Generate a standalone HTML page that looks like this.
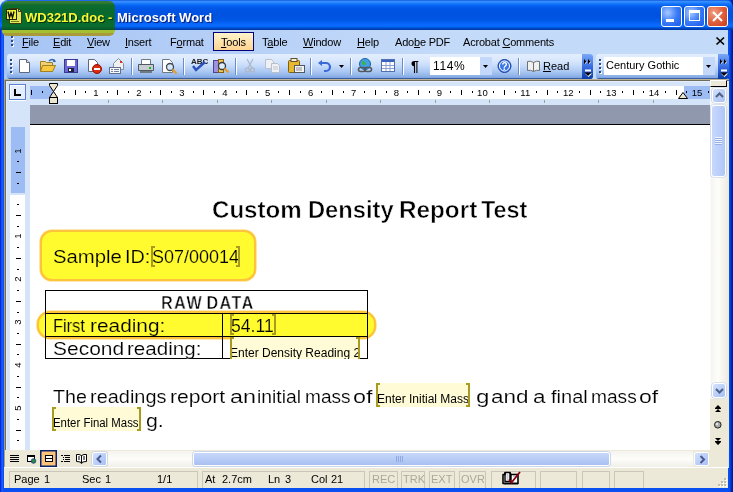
<!DOCTYPE html><html><head><meta charset="utf-8"><style>
*{box-sizing:border-box;margin:0;padding:0}
html,body{width:733px;height:492px;overflow:hidden;background:#fff;-webkit-font-smoothing:antialiased}
body{font-family:"Liberation Sans",sans-serif;font-size:11px;color:#000;position:relative}
.a{position:absolute}
svg{position:absolute;overflow:visible}
.mi{position:absolute;top:7px;white-space:nowrap;font-size:11px;letter-spacing:-0.2px}
.u{text-decoration:underline;text-underline-offset:1px}
.sep{position:absolute;top:4px;width:2px;height:17px;border-left:1px solid #6a8ccb;border-right:1px solid #fff}
.st{position:absolute;top:2px;height:17px;border:1px solid #c8c4b0;border-right-color:#fff;border-bottom-color:#fff;font-size:11px;line-height:15px;white-space:nowrap}
.doct{position:absolute;white-space:nowrap;font-family:"Liberation Sans",sans-serif;transform-origin:0 0;will-change:transform}
.ph{position:absolute;background:#fffbd6;font-size:12px;white-space:nowrap;overflow:hidden}
.brk{position:absolute;border:2px solid #a89c20;width:4px}
.brl{border-right:none}
.brr{border-left:none}
</style></head><body><div style="position:absolute;left:0;top:0;width:733px;height:492px;overflow:hidden;will-change:transform">
<div class="a" style="left:0;top:0;width:733px;height:492px;background:linear-gradient(90deg,#0a1ad8 0,#0a30e8 1px,#1a70ff 2px,#0a50f0 3px,#0a50f0 729px,#0848e8 730px,#0030c0 731px,#001890 733px)"></div>
<div class="a" style="left:0;top:0;width:8px;height:8px;background:#dce8f0"></div>
<div class="a" style="left:0;top:0;width:733px;height:30px;border-radius:8px 8px 0 0;background:linear-gradient(#0040d0 0px,#3a93ff 1px,#2a86ff 2.5px,#1272f8 4px,#0460f0 6px,#0056e6 9px,#0052e0 14px,#0054e3 18px,#005ae8 21px,#0866fc 24px,#0a6cff 26px,#0060f0 27px,#0048c0 28.5px,#0034a0 30px)"></div>
<div class="a" style="left:2px;top:1px;width:113px;height:34px;border-radius:6px;overflow:hidden;background:linear-gradient(#3c7c38 0px,#2e7a34 2px,#0e6c2e 4px,#0a6a2e 8px,#086a2c 20px,#0a6e30 25px,#0a5a28 28px,#0a4a22 30px,#a4c030 30px,#a4c030 33px,#a89a3a 33px)"></div>
<div class="a" style="left:117px;top:10px;font-weight:bold;font-size:13px;color:#fff;text-shadow:1px 1px #0a1e7a;white-space:nowrap">Microsoft Word</div>
<div class="a" style="left:25px;top:10px;font-weight:bold;font-size:13px;color:#f8f838;text-shadow:1px 1px #04300e;white-space:nowrap">WD321D.doc -</div>
<svg style="left:6px;top:8px" width="17" height="16" viewBox="0 0 17 16"><path d="M3.5 0.5h9l3 3v12h-12z" fill="#e0e858" stroke="#3c3c0c"/><path d="M12.5 0.5v3h3" fill="none" stroke="#3c3c0c"/><path d="M5 13.5h8" stroke="#7a8020"/><rect x="0.5" y="1.5" width="10" height="10" fill="#eef43c" stroke="#24280a"/><path d="M2 3.5l1.5 6 1.5-4.5 1.5 4.5 1.5-6" fill="none" stroke="#101004" stroke-width="1.4"/></svg>
<div class="a" style="left:661px;top:6px;width:21px;height:21px;border:1px solid #fff;border-radius:3px;background:radial-gradient(circle at 30% 30%,#a8c8ff 0%,#3a7cf8 50%,#1a58e8 100%)"></div>
<div class="a" style="left:684px;top:6px;width:21px;height:21px;border:1px solid #fff;border-radius:3px;background:radial-gradient(circle at 30% 30%,#a8c8ff 0%,#3a7cf8 50%,#1a58e8 100%)"></div>
<div class="a" style="left:707px;top:6px;width:21px;height:21px;border:1px solid #fff;border-radius:3px;background:radial-gradient(circle at 30% 30%,#f0a080 0%,#e06040 50%,#c83a18 100%)"></div>
<div class="a" style="left:666px;top:19px;width:8px;height:3px;background:#fff"></div>
<div class="a" style="left:689px;top:10px;width:11px;height:11px;border:1px solid #fff;border-top-width:3px"></div>
<svg style="left:712px;top:11px" width="11" height="11"><path d="M1 1L10 10M10 1L1 10" stroke="#fff" stroke-width="2"/></svg>
<div class="a" style="left:4px;top:30px;width:724px;height:24px;background:linear-gradient(90deg,#a6c4f4,#c4daf9 60%,#c4daf9)"></div>
<div class="a" style="left:2px;top:30px;width:113px;height:6px;border-radius:0 0 7px 6px;background:linear-gradient(#a4c030 0,#a4c030 3px,#a89a3a 3px)"></div>
<div class="a" style="left:11px;top:36px;width:2px;height:2px;background:#2a4a8a;box-shadow:1px 1px #fff"></div>
<div class="a" style="left:11px;top:40px;width:2px;height:2px;background:#2a4a8a;box-shadow:1px 1px #fff"></div>
<div class="a" style="left:11px;top:44px;width:2px;height:2px;background:#2a4a8a;box-shadow:1px 1px #fff"></div>
<div class="a" style="left:213px;top:32px;width:41px;height:19px;border:1px solid #000080;background:linear-gradient(#fff4cc,#ffd490)"></div>
<div class="mi" style="left:22px;top:36px"><span class="u">F</span>ile</div>
<div class="mi" style="left:53px;top:36px"><span class="u">E</span>dit</div>
<div class="mi" style="left:87px;top:36px"><span class="u">V</span>iew</div>
<div class="mi" style="left:125px;top:36px"><span class="u">I</span>nsert</div>
<div class="mi" style="left:170px;top:36px">F<span class="u">o</span>rmat</div>
<div class="mi" style="left:221px;top:36px"><span class="u">T</span>ools</div>
<div class="mi" style="left:262px;top:36px">T<span class="u">a</span>ble</div>
<div class="mi" style="left:303px;top:36px"><span class="u">W</span>indow</div>
<div class="mi" style="left:357px;top:36px"><span class="u">H</span>elp</div>
<div class="mi" style="left:395px;top:36px">Ado<span class="u">b</span>e PDF</div>
<div class="mi" style="left:463px;top:36px">Acrobat <span class="u">C</span>omments</div>
<svg style="left:716px;top:37px" width="9" height="8"><path d="M0.5 0.5L8 7.5M8 0.5L0.5 7.5" stroke="#000" stroke-width="1.7"/></svg>
<div class="a" style="left:4px;top:54px;width:724px;height:25px;background:linear-gradient(90deg,#a6c4f4,#c4daf9 60%,#c4daf9)"></div>
<div class="a" style="left:7px;top:54px;width:586px;height:25px;border-radius:3px;background:linear-gradient(#e3effe 0px,#dae8fd 6px,#c5dafa 12px,#a8c6f2 18px,#8eb2e8 22px,#7ea2e2 24px,#3b5ea0 24px)"></div>
<div class="a" style="left:596px;top:54px;width:132px;height:25px;border-radius:3px;background:linear-gradient(#e3effe 0px,#dae8fd 6px,#c5dafa 12px,#a8c6f2 18px,#8eb2e8 22px,#7ea2e2 24px,#3b5ea0 24px)"></div>
<div class="a" style="left:10px;top:59px;width:2px;height:2px;background:#2a4a8a;box-shadow:1px 1px #fff"></div>
<div class="a" style="left:599px;top:59px;width:2px;height:2px;background:#2a4a8a;box-shadow:1px 1px #fff"></div>
<div class="a" style="left:10px;top:63px;width:2px;height:2px;background:#2a4a8a;box-shadow:1px 1px #fff"></div>
<div class="a" style="left:599px;top:63px;width:2px;height:2px;background:#2a4a8a;box-shadow:1px 1px #fff"></div>
<div class="a" style="left:10px;top:67px;width:2px;height:2px;background:#2a4a8a;box-shadow:1px 1px #fff"></div>
<div class="a" style="left:599px;top:67px;width:2px;height:2px;background:#2a4a8a;box-shadow:1px 1px #fff"></div>
<div class="a" style="left:10px;top:71px;width:2px;height:2px;background:#2a4a8a;box-shadow:1px 1px #fff"></div>
<div class="a" style="left:599px;top:71px;width:2px;height:2px;background:#2a4a8a;box-shadow:1px 1px #fff"></div>
<div class="a" style="left:582px;top:54px;width:11px;height:25px;border-radius:0 3px 3px 0;background:linear-gradient(#7aa8f8,#3a6ee0 50%,#0a3aa8)"></div>
<div class="a" style="left:718px;top:54px;width:11px;height:25px;border-radius:0 3px 3px 0;background:linear-gradient(#7aa8f8,#3a6ee0 50%,#0a3aa8)"></div>
<svg style="left:583px;top:58px" width="10" height="20"><path d="M2 2l2 2-2 2zM6 2l2 2-2 2z" fill="#fff"/><path d="M1 1l2.5 2.5-2.5 2.5zM5 1l2.5 2.5-2.5 2.5z" fill="#000"/><rect x="2" y="11.5" width="6" height="2" fill="#fff"/><path d="M2 15.5h7l-3.5 3.5z" fill="#fff"/><path d="M1.5 14.5h7l-3.5 3.5z" fill="#000"/></svg>
<svg style="left:719px;top:58px" width="10" height="20"><path d="M2 2l2 2-2 2zM6 2l2 2-2 2z" fill="#fff"/><path d="M1 1l2.5 2.5-2.5 2.5zM5 1l2.5 2.5-2.5 2.5z" fill="#000"/><rect x="2" y="11.5" width="6" height="2" fill="#fff"/><path d="M2 15.5h7l-3.5 3.5z" fill="#fff"/><path d="M1.5 14.5h7l-3.5 3.5z" fill="#000"/></svg>
<div class="sep" style="left:131px;top:58px"></div>
<div class="sep" style="left:183px;top:58px"></div>
<div class="sep" style="left:235px;top:58px"></div>
<div class="sep" style="left:310px;top:58px"></div>
<div class="sep" style="left:350px;top:58px"></div>
<div class="sep" style="left:402px;top:58px"></div>
<div class="sep" style="left:518px;top:58px"></div>
<svg style="left:19px;top:59px" width="12" height="14" viewBox="0 0 12 14"><path d="M0.5 0.5h7l3 3v10h-10z" fill="#fff" stroke="#606880"/><path d="M7.5 0.5v3h3" fill="#dde" stroke="#606880"/></svg>
<svg style="left:40px;top:58px" width="17" height="15" viewBox="0 0 17 15"><path d="M0.5 3.5h5l1 1h6v9h-12z" fill="#f0d070" stroke="#a08020"/><path d="M2.5 7.5h13l-3 6h-12z" fill="#f8c840" stroke="#a08020"/><path d="M9 3q3-3 6 0" stroke="#3060b0" fill="none" stroke-width="1.5"/><path d="M14 1l2 3-3 0z" fill="#3060b0"/></svg>
<svg style="left:64px;top:59px" width="14" height="14" viewBox="0 0 14 14"><rect x="0.5" y="0.5" width="13" height="13" fill="#6a68d0" stroke="#3a3890"/><rect x="3" y="1" width="8" height="6" fill="#fff"/><rect x="4" y="9" width="6" height="4" fill="#202040"/><rect x="5" y="10" width="2" height="2" fill="#fff"/></svg>
<svg style="left:88px;top:59px" width="14" height="15" viewBox="0 0 14 15"><path d="M0.5 0.5h6l3 3v9h-9z" fill="#fff" stroke="#606880"/><circle cx="9" cy="10" r="4.5" fill="#e02a10" stroke="#901000"/><rect x="6" y="9" width="6" height="2" fill="#fff"/></svg>
<svg style="left:109px;top:58px" width="17" height="16" viewBox="0 0 17 16"><path d="M4.5 5.5l5-5 5 5v6h-10z" fill="#f0f0f0" stroke="#8090a0"/><rect x="11" y="3" width="2" height="2" fill="#e03020"/><rect x="0.5" y="9.5" width="11" height="6" fill="#f8f8f8" stroke="#607090"/><path d="M2 11.5h2M2 13.5h2M5 11.5h5M5 13.5h5" stroke="#7080a0"/></svg>
<svg style="left:138px;top:59px" width="16" height="14" viewBox="0 0 16 14"><path d="M3.5 0.5h9v5h-9z" fill="#fff" stroke="#707880"/><path d="M0.5 5.5h15v6h-15z" fill="#c8ccd4" stroke="#505860"/><rect x="2" y="12" width="12" height="2" fill="#707880"/><rect x="11" y="8" width="2" height="2" fill="#10c020"/></svg>
<svg style="left:162px;top:59px" width="16" height="15" viewBox="0 0 16 15"><path d="M0.5 0.5h7l3 3v10h-10z" fill="#fff" stroke="#707880"/><circle cx="8" cy="8" r="3.5" fill="#d8e8f8" stroke="#404850" stroke-width="1.3"/><path d="M10.5 10.5l4 4" stroke="#e0a030" stroke-width="2.4"/></svg>
<svg style="left:190px;top:57px" width="17" height="15" viewBox="0 0 17 15"><text x="1" y="7" font-size="8" font-family="Liberation Sans" font-weight="bold" fill="#202020">ABC</text><path d="M3 9l3 4 9-8" stroke="#2a50c0" stroke-width="2.5" fill="none"/></svg>
<svg style="left:213px;top:58px" width="16" height="15" viewBox="0 0 16 15"><rect x="0.5" y="2.5" width="5" height="12" fill="#a090e0" stroke="#504090"/><rect x="5.5" y="1.5" width="5" height="13" fill="#f0c850" stroke="#806020"/><circle cx="9" cy="8" r="3.5" fill="#e0ecf8" stroke="#303840" stroke-width="1.3"/><path d="M11.5 10.5l4 4" stroke="#e0a030" stroke-width="2.4"/></svg>
<svg style="left:245px;top:59px" width="10" height="14" viewBox="0 0 10 14"><path d="M2 0l5 9M8 0l-5 9" stroke="#b0b8c8" stroke-width="1.3"/><circle cx="2.5" cy="11" r="2" fill="none" stroke="#b0b8c8" stroke-width="1.3"/><circle cx="7.5" cy="11" r="2" fill="none" stroke="#b0b8c8" stroke-width="1.3"/></svg>
<svg style="left:265px;top:59px" width="15" height="14" viewBox="0 0 15 14"><path d="M0.5 0.5h6l2 2v7h-8z" fill="#eef0f4" stroke="#b8c0cc"/><path d="M6.5 4.5h6l2 2v7h-8z" fill="#eef0f4" stroke="#b8c0cc"/><path d="M8 8h5M8 10h5" stroke="#c0c8d0"/></svg>
<svg style="left:288px;top:58px" width="17" height="15" viewBox="0 0 17 15"><rect x="0.5" y="2.5" width="11" height="12" rx="1" fill="#e8b830" stroke="#806010"/><rect x="3" y="0.5" width="6" height="3" fill="#f8f0d0" stroke="#605030"/><rect x="6.5" y="7.5" width="10" height="7" fill="#f4f4f4" stroke="#505860"/><path d="M8 10h6M8 12h6" stroke="#909090"/></svg>
<svg style="left:318px;top:60px" width="14" height="12" viewBox="0 0 14 12"><path d="M3 3h5a4 4 0 0 1 0 8h-2" stroke="#3a6ad8" stroke-width="2.2" fill="none"/><path d="M0 3l4-3v6z" fill="#3a6ad8"/></svg>
<svg style="left:339px;top:65px" width="6" height="3" viewBox="0 0 6 3"><path d="M0 0h5l-2.5 3z" fill="#000"/></svg>
<svg style="left:357px;top:58px" width="16" height="15" viewBox="0 0 16 15"><circle cx="8" cy="6" r="5.5" fill="#40a0e0" stroke="#2060a0"/><path d="M5 3q3 0 4 3q-2 2-4 0z" fill="#40b040"/><rect x="1.5" y="9.5" width="7" height="4" rx="2" fill="none" stroke="#505860" stroke-width="1.6"/><rect x="7.5" y="9.5" width="7" height="4" rx="2" fill="none" stroke="#505860" stroke-width="1.6"/></svg>
<svg style="left:381px;top:59px" width="14" height="13" viewBox="0 0 14 13"><rect x="0.5" y="0.5" width="13" height="12" fill="#fff" stroke="#5070b0"/><rect x="1" y="1" width="12" height="2" fill="#3a60c0"/><path d="M1 6.5h12M1 9.5h12M5 3v9M9 3v9" stroke="#8aa0d0"/></svg>
<div class="a" style="left:411px;top:58px;font-size:14px;font-weight:bold">&para;</div>
<div class="a" style="left:430px;top:57px;width:62px;height:18px;background:#fff"></div>
<div class="a" style="left:480px;top:57px;width:12px;height:18px;background:#c4d8fa"></div>
<svg style="left:483px;top:65px" width="6" height="3" viewBox="0 0 6 3"><path d="M0 0h5l-2.5 3z" fill="#000"/></svg>
<div class="a" style="left:433px;top:59px;font-size:12px;letter-spacing:0.6px">114%</div>
<svg style="left:497px;top:59px" width="15" height="15" viewBox="0 0 15 15"><circle cx="7.5" cy="7" r="6.5" fill="#3a78e8" stroke="#1a3aa0"/><circle cx="7.5" cy="7" r="5" fill="none" stroke="#fff" stroke-width="1"/><text x="4.5" y="10.5" font-size="10" font-weight="bold" fill="#fff" font-family="Liberation Sans">?</text></svg>
<svg style="left:527px;top:60px" width="14" height="12" viewBox="0 0 14 12"><path d="M0.5 1.5q3-1 6 1q3-2 6-1v9q-3-1-6 1q-3-2-6-1z" fill="#f0f0f0" stroke="#707070"/><path d="M6.5 2.5v9" stroke="#707070"/></svg>
<div class="a" style="left:543px;top:60px;font-size:11px"><span class="u">R</span>ead</div>
<div class="a" style="left:604px;top:57px;width:111px;height:18px;background:#fff"></div>
<div class="a" style="left:703px;top:57px;width:12px;height:18px;background:#c4d8fa"></div>
<svg style="left:706px;top:65px" width="6" height="3" viewBox="0 0 6 3"><path d="M0 0h5l-2.5 3z" fill="#000"/></svg>
<div class="a" style="left:606px;top:59px;font-size:11px">Century Gothic</div>
<div class="a" style="left:4px;top:79px;width:725px;height:389px;background:#a4a08a;border-top:1px solid #bcb294"></div>
<div class="a" style="left:5px;top:80px;width:724px;height:388px;background:#6e6c5e"></div>
<div class="a" style="left:6px;top:81px;width:723px;height:387px;background:#d6e4fa;border-left:1px solid #e4eefc;border-top:1px solid #e4eefc"></div>
<div class="a" style="left:9px;top:100px;width:17px;height:1px;background:#fff"></div>
<div class="a" style="left:9px;top:84px;width:17px;height:16px;border:1px solid #5a80d8;background:#e4eefc;box-shadow:inset 1px 1px #fff"></div>
<div class="a" style="left:14px;top:89px;width:2px;height:7px;background:#000"></div><div class="a" style="left:14px;top:94px;width:7px;height:2px;background:#000"></div>
<div class="a" style="left:30px;top:86px;width:681px;height:13px;background:#fff"></div>
<div class="a" style="left:30px;top:86px;width:24px;height:13px;background:#9ebcf4"></div>
<div class="a" style="left:684px;top:86px;width:27px;height:13px;background:#9ebcf4"></div>
<div class="a" style="left:31px;top:90px;width:1px;height:5px;background:#000"></div>
<div class="a" style="left:42px;top:91px;width:1px;height:2px;background:#000"></div>
<div class="a" style="left:64px;top:91px;width:1px;height:2px;background:#000"></div>
<div class="a" style="left:75px;top:90px;width:1px;height:5px;background:#000"></div>
<div class="a" style="left:85px;top:91px;width:1px;height:2px;background:#000"></div>
<div class="a" style="left:86.0px;top:86px;width:20px;text-align:center;font-size:9.5px;line-height:13px">1</div>
<div class="a" style="left:107px;top:91px;width:1px;height:2px;background:#000"></div>
<div class="a" style="left:117px;top:90px;width:1px;height:5px;background:#000"></div>
<div class="a" style="left:128px;top:91px;width:1px;height:2px;background:#000"></div>
<div class="a" style="left:128.9px;top:86px;width:20px;text-align:center;font-size:9.5px;line-height:13px">2</div>
<div class="a" style="left:150px;top:91px;width:1px;height:2px;background:#000"></div>
<div class="a" style="left:160px;top:90px;width:1px;height:5px;background:#000"></div>
<div class="a" style="left:171px;top:91px;width:1px;height:2px;background:#000"></div>
<div class="a" style="left:171.9px;top:86px;width:20px;text-align:center;font-size:9.5px;line-height:13px">3</div>
<div class="a" style="left:193px;top:91px;width:1px;height:2px;background:#000"></div>
<div class="a" style="left:203px;top:90px;width:1px;height:5px;background:#000"></div>
<div class="a" style="left:214px;top:91px;width:1px;height:2px;background:#000"></div>
<div class="a" style="left:214.8px;top:86px;width:20px;text-align:center;font-size:9.5px;line-height:13px">4</div>
<div class="a" style="left:236px;top:91px;width:1px;height:2px;background:#000"></div>
<div class="a" style="left:246px;top:90px;width:1px;height:5px;background:#000"></div>
<div class="a" style="left:257px;top:91px;width:1px;height:2px;background:#000"></div>
<div class="a" style="left:257.7px;top:86px;width:20px;text-align:center;font-size:9.5px;line-height:13px">5</div>
<div class="a" style="left:278px;top:91px;width:1px;height:2px;background:#000"></div>
<div class="a" style="left:289px;top:90px;width:1px;height:5px;background:#000"></div>
<div class="a" style="left:300px;top:91px;width:1px;height:2px;background:#000"></div>
<div class="a" style="left:300.6px;top:86px;width:20px;text-align:center;font-size:9.5px;line-height:13px">6</div>
<div class="a" style="left:321px;top:91px;width:1px;height:2px;background:#000"></div>
<div class="a" style="left:332px;top:90px;width:1px;height:5px;background:#000"></div>
<div class="a" style="left:343px;top:91px;width:1px;height:2px;background:#000"></div>
<div class="a" style="left:343.6px;top:86px;width:20px;text-align:center;font-size:9.5px;line-height:13px">7</div>
<div class="a" style="left:364px;top:91px;width:1px;height:2px;background:#000"></div>
<div class="a" style="left:375px;top:90px;width:1px;height:5px;background:#000"></div>
<div class="a" style="left:386px;top:91px;width:1px;height:2px;background:#000"></div>
<div class="a" style="left:386.5px;top:86px;width:20px;text-align:center;font-size:9.5px;line-height:13px">8</div>
<div class="a" style="left:407px;top:91px;width:1px;height:2px;background:#000"></div>
<div class="a" style="left:418px;top:90px;width:1px;height:5px;background:#000"></div>
<div class="a" style="left:429px;top:91px;width:1px;height:2px;background:#000"></div>
<div class="a" style="left:429.4px;top:86px;width:20px;text-align:center;font-size:9.5px;line-height:13px">9</div>
<div class="a" style="left:450px;top:91px;width:1px;height:2px;background:#000"></div>
<div class="a" style="left:461px;top:90px;width:1px;height:5px;background:#000"></div>
<div class="a" style="left:472px;top:91px;width:1px;height:2px;background:#000"></div>
<div class="a" style="left:472.4px;top:86px;width:20px;text-align:center;font-size:9.5px;line-height:13px">10</div>
<div class="a" style="left:493px;top:91px;width:1px;height:2px;background:#000"></div>
<div class="a" style="left:504px;top:90px;width:1px;height:5px;background:#000"></div>
<div class="a" style="left:515px;top:91px;width:1px;height:2px;background:#000"></div>
<div class="a" style="left:515.3px;top:86px;width:20px;text-align:center;font-size:9.5px;line-height:13px">11</div>
<div class="a" style="left:536px;top:91px;width:1px;height:2px;background:#000"></div>
<div class="a" style="left:547px;top:90px;width:1px;height:5px;background:#000"></div>
<div class="a" style="left:557px;top:91px;width:1px;height:2px;background:#000"></div>
<div class="a" style="left:558.2px;top:86px;width:20px;text-align:center;font-size:9.5px;line-height:13px">12</div>
<div class="a" style="left:579px;top:91px;width:1px;height:2px;background:#000"></div>
<div class="a" style="left:590px;top:90px;width:1px;height:5px;background:#000"></div>
<div class="a" style="left:600px;top:91px;width:1px;height:2px;background:#000"></div>
<div class="a" style="left:601.2px;top:86px;width:20px;text-align:center;font-size:9.5px;line-height:13px">13</div>
<div class="a" style="left:622px;top:91px;width:1px;height:2px;background:#000"></div>
<div class="a" style="left:633px;top:90px;width:1px;height:5px;background:#000"></div>
<div class="a" style="left:643px;top:91px;width:1px;height:2px;background:#000"></div>
<div class="a" style="left:644.1px;top:86px;width:20px;text-align:center;font-size:9.5px;line-height:13px">14</div>
<div class="a" style="left:665px;top:91px;width:1px;height:2px;background:#000"></div>
<div class="a" style="left:676px;top:90px;width:1px;height:5px;background:#000"></div>
<div class="a" style="left:686px;top:91px;width:1px;height:2px;background:#000"></div>
<div class="a" style="left:687.0px;top:86px;width:20px;text-align:center;font-size:9.5px;line-height:13px">15</div>
<div class="a" style="left:708px;top:91px;width:1px;height:2px;background:#000"></div>
<div class="a" style="left:108px;top:100px;width:1px;height:3px;background:#a0a0a0"></div>
<div class="a" style="left:162px;top:100px;width:1px;height:3px;background:#a0a0a0"></div>
<div class="a" style="left:217px;top:100px;width:1px;height:3px;background:#a0a0a0"></div>
<div class="a" style="left:271px;top:100px;width:1px;height:3px;background:#a0a0a0"></div>
<div class="a" style="left:326px;top:100px;width:1px;height:3px;background:#a0a0a0"></div>
<div class="a" style="left:380px;top:100px;width:1px;height:3px;background:#a0a0a0"></div>
<div class="a" style="left:435px;top:100px;width:1px;height:3px;background:#a0a0a0"></div>
<div class="a" style="left:489px;top:100px;width:1px;height:3px;background:#a0a0a0"></div>
<div class="a" style="left:544px;top:100px;width:1px;height:3px;background:#a0a0a0"></div>
<div class="a" style="left:598px;top:100px;width:1px;height:3px;background:#a0a0a0"></div>
<div class="a" style="left:653px;top:100px;width:1px;height:3px;background:#a0a0a0"></div>
<svg style="left:49px;top:83px" width="10" height="22" viewBox="0 0 10 22"><path d="M0.5 0.5h8v2l-4 6-4-6z" fill="#ece6d0" stroke="#000"/><path d="M4.5 8.5l4 6v0h-8z" fill="#ece6d0" stroke="#000"/><rect x="0.5" y="14.5" width="8" height="6" fill="#ece6d0" stroke="#000"/></svg>
<svg style="left:678px;top:91px" width="10" height="8" viewBox="0 0 10 8"><path d="M0.5 7.5l4.5-6 4.5 6z" fill="#ece6d0" stroke="#000"/></svg>
<div class="a" style="left:30px;top:105px;width:681px;height:20px;background:#8f98ac;border-bottom:1px solid #000"></div>
<div class="a" style="left:30px;top:125px;width:681px;height:325px;background:#fff"></div>
<div class="a" style="left:10px;top:195px;width:15px;height:255px;background:#fff"></div>
<div class="a" style="left:11px;top:127px;width:14px;height:66px;background:#9ebcf4"></div>
<div class="a" style="left:11px;top:144.6px;width:14px;height:12px"><div style="position:absolute;left:0;top:0;width:14px;height:12px;transform:rotate(-90deg);text-align:center;font-size:9.5px;line-height:12px">1</div></div>
<div class="a" style="left:17px;top:161px;width:2px;height:1px;background:#000"></div>
<div class="a" style="left:16px;top:172px;width:5px;height:1px;background:#000"></div>
<div class="a" style="left:17px;top:183px;width:2px;height:1px;background:#000"></div>
<div class="a" style="left:17px;top:204px;width:2px;height:1px;background:#000"></div>
<div class="a" style="left:16px;top:215px;width:5px;height:1px;background:#000"></div>
<div class="a" style="left:17px;top:226px;width:2px;height:1px;background:#000"></div>
<div class="a" style="left:11px;top:230.4px;width:14px;height:12px"><div style="position:absolute;left:0;top:0;width:14px;height:12px;transform:rotate(-90deg);text-align:center;font-size:9.5px;line-height:12px">1</div></div>
<div class="a" style="left:17px;top:247px;width:2px;height:1px;background:#000"></div>
<div class="a" style="left:16px;top:258px;width:5px;height:1px;background:#000"></div>
<div class="a" style="left:17px;top:269px;width:2px;height:1px;background:#000"></div>
<div class="a" style="left:11px;top:273.4px;width:14px;height:12px"><div style="position:absolute;left:0;top:0;width:14px;height:12px;transform:rotate(-90deg);text-align:center;font-size:9.5px;line-height:12px">2</div></div>
<div class="a" style="left:17px;top:290px;width:2px;height:1px;background:#000"></div>
<div class="a" style="left:16px;top:301px;width:5px;height:1px;background:#000"></div>
<div class="a" style="left:17px;top:312px;width:2px;height:1px;background:#000"></div>
<div class="a" style="left:11px;top:316.3px;width:14px;height:12px"><div style="position:absolute;left:0;top:0;width:14px;height:12px;transform:rotate(-90deg);text-align:center;font-size:9.5px;line-height:12px">3</div></div>
<div class="a" style="left:17px;top:333px;width:2px;height:1px;background:#000"></div>
<div class="a" style="left:16px;top:344px;width:5px;height:1px;background:#000"></div>
<div class="a" style="left:17px;top:354px;width:2px;height:1px;background:#000"></div>
<div class="a" style="left:11px;top:359.2px;width:14px;height:12px"><div style="position:absolute;left:0;top:0;width:14px;height:12px;transform:rotate(-90deg);text-align:center;font-size:9.5px;line-height:12px">4</div></div>
<div class="a" style="left:17px;top:376px;width:2px;height:1px;background:#000"></div>
<div class="a" style="left:16px;top:387px;width:5px;height:1px;background:#000"></div>
<div class="a" style="left:17px;top:397px;width:2px;height:1px;background:#000"></div>
<div class="a" style="left:11px;top:402.1px;width:14px;height:12px"><div style="position:absolute;left:0;top:0;width:14px;height:12px;transform:rotate(-90deg);text-align:center;font-size:9.5px;line-height:12px">5</div></div>
<div class="a" style="left:17px;top:419px;width:2px;height:1px;background:#000"></div>
<div class="a" style="left:16px;top:430px;width:5px;height:1px;background:#000"></div>
<div class="a" style="left:17px;top:440px;width:2px;height:1px;background:#000"></div>
<div class="a" style="left:710px;top:81px;width:19px;height:369px;background:linear-gradient(90deg,#fff 0,#f6f5f0 1px,#fdfdfa 8px,#f0efe6 16px,#ecebe0 18px)"></div>
<div class="a" style="left:710px;top:80px;width:17px;height:7px;background:#ece9d8;border:1px solid #000;border-top-color:#fff;border-left-color:#fff"></div>
<div class="a" style="left:712px;top:88px;width:14px;height:15px;border:1px solid #fff;border-radius:3px;background:linear-gradient(135deg,#d4e2fc,#bcd0f8 50%,#a8c0f4);box-shadow:0 0 0 0.6px #b8c8f0"></div>
<svg style="left:715px;top:92px" width="9" height="6" viewBox="0 0 9 6"><path d="M1 5l3.5-3.5 3.5 3.5" stroke="#4d6185" stroke-width="2" fill="none"/></svg>
<div class="a" style="left:711px;top:105px;width:15px;height:72px;border:1px solid #fff;border-radius:3px;background:linear-gradient(90deg,#c8d8fc,#bcd0fa 50%,#b0c6f6);box-shadow:0 0 0 0.6px #b8c8f0"></div>
<div class="a" style="left:715px;top:137px;width:7px;height:2px;background:#eef4fe;border-bottom:1px solid #98b0e8"></div>
<div class="a" style="left:715px;top:139px;width:7px;height:2px;background:#eef4fe;border-bottom:1px solid #98b0e8"></div>
<div class="a" style="left:715px;top:141px;width:7px;height:2px;background:#eef4fe;border-bottom:1px solid #98b0e8"></div>
<div class="a" style="left:715px;top:143px;width:7px;height:2px;background:#eef4fe;border-bottom:1px solid #98b0e8"></div>
<div class="a" style="left:712px;top:383px;width:14px;height:15px;border:1px solid #fff;border-radius:3px;background:linear-gradient(135deg,#d4e2fc,#bcd0f8 50%,#a8c0f4);box-shadow:0 0 0 0.6px #b8c8f0"></div>
<svg style="left:715px;top:388px" width="9" height="6" viewBox="0 0 9 6"><path d="M1 1l3.5 3.5 3.5-3.5" stroke="#4d6185" stroke-width="2" fill="none"/></svg>
<div class="a" style="left:710px;top:399px;width:19px;height:51px;background:#ece9d8"></div>
<svg style="left:715px;top:405px" width="7" height="7" viewBox="0 0 7 7"><path d="M0 3l3-3 3 3z M0 3h6v1h-6z M0 7l3-3 3 3z" fill="#000"/></svg>
<svg style="left:714px;top:421px" width="8" height="8" viewBox="0 0 8 8"><circle cx="3.8" cy="3.8" r="3.3" fill="#a8a8a8" stroke="#202020"/><circle cx="3" cy="3" r="1.2" fill="#e8e8e8"/></svg>
<svg style="left:715px;top:438px" width="7" height="7" viewBox="0 0 7 7"><path d="M0 0l3 3 3-3z M0 4l3 3 3-3z M0 3h6v1h-6z" fill="#000"/></svg>
<div class="a" style="left:5px;top:450px;width:723px;height:17px;background:#ece9d8"></div>
<svg style="left:10px;top:455px" width="9" height="8" viewBox="0 0 9 8"><path d="M0 0.5h9M0 2.5h9M0 4.5h9M0 6.5h9" stroke="#000"/></svg>
<svg style="left:27px;top:455px" width="9" height="9" viewBox="0 0 9 9"><rect x="0.5" y="0.5" width="7" height="6" fill="#fff" stroke="#000"/><rect x="0" y="0" width="8" height="2" fill="#000"/><circle cx="6.5" cy="6" r="2.3" fill="#2a8a3a" stroke="#1a3a8a" stroke-width="0.8"/></svg>
<div class="a" style="left:40px;top:450px;width:17px;height:17px;background:#ffc37a;border:1px solid #0a246a;box-shadow:inset 0 0 0 0.5px #0a246a"></div>
<svg style="left:45px;top:455px" width="8" height="7" viewBox="0 0 8 7"><rect x="0.5" y="0.5" width="7" height="6" fill="#fff" stroke="#000"/><path d="M1 3.5h6" stroke="#000"/></svg>
<svg style="left:61px;top:455px" width="10" height="8" viewBox="0 0 10 8"><path d="M0 0.5h2M3 0.5h6M2 2.5h1M4 2.5h5M2 4.5h1M4 4.5h5M0 6.5h2M3 6.5h6" stroke="#000"/></svg>
<svg style="left:76px;top:454px" width="11" height="10" viewBox="0 0 11 10"><path d="M0.5 0.5q2.5-0.5 5 1q2.5-1.5 5-1v7q-2.5 0-5 1q-2.5-1-5-1z" fill="#fff" stroke="#000"/><path d="M5.5 1.5v7M2 3h2M2 5h2M7 3h2M7 5h2" stroke="#000"/><path d="M4 8.5h3l-1.5 1.5z" fill="#000"/></svg>
<div class="a" style="left:92px;top:452px;width:15px;height:14px;border:1px solid #fff;border-radius:2px;background:linear-gradient(135deg,#d4e2fc,#bcd0f8 50%,#a8c0f4);box-shadow:0 0 0 0.5px #b8c8e8"></div>
<svg style="left:96px;top:455px" width="7" height="8" viewBox="0 0 7 8"><path d="M5 0.5l-3.5 3.5 3.5 3.5" stroke="#4a5a90" stroke-width="2" fill="none"/></svg>
<div class="a" style="left:108px;top:451px;width:585px;height:16px;background:linear-gradient(#f4f3ee,#fdfdfa 50%,#f0efe8)"></div>
<div class="a" style="left:193px;top:452px;width:417px;height:14px;border:1px solid #fff;border-radius:2px;background:linear-gradient(#c8d8fa,#b8ccf6 50%,#a8c0f2);box-shadow:0 0 0 0.5px #a0b8e8"></div>
<div class="a" style="left:396px;top:456px;width:1px;height:6px;background:#eef4fe;border-right:1px solid #90a8e0"></div>
<div class="a" style="left:398px;top:456px;width:1px;height:6px;background:#eef4fe;border-right:1px solid #90a8e0"></div>
<div class="a" style="left:400px;top:456px;width:1px;height:6px;background:#eef4fe;border-right:1px solid #90a8e0"></div>
<div class="a" style="left:402px;top:456px;width:1px;height:6px;background:#eef4fe;border-right:1px solid #90a8e0"></div>
<div class="a" style="left:694px;top:452px;width:15px;height:14px;border:1px solid #fff;border-radius:2px;background:linear-gradient(135deg,#d4e2fc,#bcd0f8 50%,#a8c0f4)"></div>
<svg style="left:699px;top:455px" width="7" height="8" viewBox="0 0 7 8"><path d="M1.5 1l3.5 3.5-3.5 3.5" stroke="#4a5a90" stroke-width="2" fill="none"/></svg>
<div class="a" style="left:4px;top:467px;width:724px;height:21px;background:#ece9d8;border-top:1px solid #fff"></div>
<div class="a" style="left:9px;top:471px;width:189px;height:17px;border:1px solid #cbc7b8;border-bottom:none"></div>
<div class="a" style="left:202px;top:471px;width:163px;height:17px;border:1px solid #cbc7b8;border-bottom:none"></div>
<div class="a" style="left:369px;top:471px;width:29px;height:17px;border:1px solid #cbc7b8;border-bottom:none"></div>
<div class="a" style="left:401px;top:471px;width:24px;height:17px;border:1px solid #cbc7b8;border-bottom:none"></div>
<div class="a" style="left:429px;top:471px;width:26px;height:17px;border:1px solid #cbc7b8;border-bottom:none"></div>
<div class="a" style="left:459px;top:471px;width:27px;height:17px;border:1px solid #cbc7b8;border-bottom:none"></div>
<div class="a" style="left:491px;top:471px;width:45px;height:17px;border:1px solid #cbc7b8;border-bottom:none"></div>
<div class="a" style="left:540px;top:471px;width:37px;height:17px;border:1px solid #cbc7b8;border-bottom:none"></div>
<div class="a" style="left:582px;top:471px;width:28px;height:17px;border:1px solid #cbc7b8;border-bottom:none"></div>
<div class="a" style="left:614px;top:471px;width:30px;height:17px;border:1px solid #cbc7b8;border-bottom:none"></div>
<div class="a" style="left:14px;top:472px;line-height:15px;font-size:11px;color:#000;white-space:nowrap">Page</div>
<div class="a" style="left:44px;top:472px;line-height:15px;font-size:11px;color:#000;white-space:nowrap">1</div>
<div class="a" style="left:82px;top:472px;line-height:15px;font-size:11px;color:#000;white-space:nowrap">Sec</div>
<div class="a" style="left:105px;top:472px;line-height:15px;font-size:11px;color:#000;white-space:nowrap">1</div>
<div class="a" style="left:157px;top:472px;line-height:15px;font-size:11px;color:#000;white-space:nowrap">1/1</div>
<div class="a" style="left:205px;top:472px;line-height:15px;font-size:11px;color:#000;white-space:nowrap">At</div>
<div class="a" style="left:222px;top:472px;line-height:15px;font-size:11px;color:#000;white-space:nowrap">2.7cm</div>
<div class="a" style="left:268px;top:472px;line-height:15px;font-size:11px;color:#000;white-space:nowrap">Ln</div>
<div class="a" style="left:285px;top:472px;line-height:15px;font-size:11px;color:#000;white-space:nowrap">3</div>
<div class="a" style="left:311px;top:472px;line-height:15px;font-size:11px;color:#000;white-space:nowrap">Col</div>
<div class="a" style="left:331px;top:472px;line-height:15px;font-size:11px;color:#000;white-space:nowrap">21</div>
<div class="a" style="left:372px;top:472px;line-height:15px;font-size:11px;color:#aca899;white-space:nowrap">REC</div>
<div class="a" style="left:403px;top:472px;line-height:15px;font-size:11px;color:#aca899;white-space:nowrap">TRK</div>
<div class="a" style="left:431px;top:472px;line-height:15px;font-size:11px;color:#aca899;white-space:nowrap">EXT</div>
<div class="a" style="left:461px;top:472px;line-height:15px;font-size:11px;color:#aca899;white-space:nowrap">OVR</div>
<svg style="left:502px;top:471px" width="20" height="14" viewBox="0 0 20 14"><path d="M1 3.5h2v-2h5l1 2h7v9h-15z" fill="#fff" stroke="#000" stroke-width="1.6" stroke-linejoin="round"/><path d="M3 1.5v9h5v-9M9 3.5v9" fill="none" stroke="#000" stroke-width="1.4"/><path d="M2 12.5h14" stroke="#000" stroke-width="1.6"/><path d="M4.5 4h2M4.5 6h2M4.5 8h2M11 5h3" stroke="#a0a0a0"/><path d="M7 8.5l2.5 3 8.5-10.5" fill="none" stroke="#8a0010" stroke-width="1.8"/></svg>
<div class="a" style="left:724px;top:484px;width:2px;height:2px;background:#c0bca8;box-shadow:1px 1px #fff"></div>
<div class="a" style="left:721px;top:484px;width:2px;height:2px;background:#c0bca8;box-shadow:1px 1px #fff"></div>
<div class="a" style="left:718px;top:484px;width:2px;height:2px;background:#c0bca8;box-shadow:1px 1px #fff"></div>
<div class="a" style="left:724px;top:481px;width:2px;height:2px;background:#c0bca8;box-shadow:1px 1px #fff"></div>
<div class="a" style="left:721px;top:481px;width:2px;height:2px;background:#c0bca8;box-shadow:1px 1px #fff"></div>
<div class="a" style="left:724px;top:478px;width:2px;height:2px;background:#c0bca8;box-shadow:1px 1px #fff"></div>
<div class="doct" style="left:212.15px;top:197px;font-size:23px;font-weight:bold;-webkit-text-stroke:0.5px #fff;transform:scaleX(1.0476);">Custom</div>
<div class="doct" style="left:307.54px;top:197px;font-size:23px;font-weight:bold;-webkit-text-stroke:0.5px #fff;transform:scaleX(1.0304);">Density</div>
<div class="doct" style="left:398.79px;top:197px;font-size:23px;font-weight:bold;-webkit-text-stroke:0.5px #fff;transform:scaleX(1.0557);">Report</div>
<div class="doct" style="left:480.58px;top:197px;font-size:23px;font-weight:bold;-webkit-text-stroke:0.5px #fff;transform:scaleX(1.0163);">Test</div>
<div class="a" style="left:40px;top:230px;width:216px;height:51px;border-radius:12px;background:#fffb2e;border:2px solid #fcc43a;box-shadow:0 0 0 0.6px #ffd460"></div>
<div class="doct" style="left:52.54px;top:247px;font-size:17.5px;-webkit-text-stroke:0.15px #fffb2e;transform:scaleX(1.1607);">Sample</div>
<div class="doct" style="left:124.63px;top:247px;font-size:17.5px;-webkit-text-stroke:0.15px #fffb2e;transform:scaleX(1.1333);">ID:</div>
<div class="doct" style="left:152px;top:247px;font-size:17.5px;-webkit-text-stroke:0.15px #fffb2e;transform:scaleX(1.028);">S07/00014</div>
<div class="brk brl" style="left:151px;top:246px;height:21px;"></div><div class="brk brr" style="left:236px;top:246px;height:21px;"></div>
<div class="a" style="left:37px;top:311px;width:339px;height:28px;border-radius:13px;background:#fffb2e;border:2px solid #fcc43a;box-shadow:0 0 0 0.6px #ffd460"></div>
<div class="a" style="left:45px;top:290px;width:323px;height:69px;border:1px solid #000"></div>
<div class="a" style="left:45px;top:313px;width:323px;height:1px;background:#000"></div>
<div class="a" style="left:45px;top:336px;width:323px;height:1px;background:#000"></div>
<div class="a" style="left:222px;top:313px;width:1px;height:46px;background:#000"></div>
<div class="doct" style="left:161px;top:293px;font-size:18px;font-weight:bold;-webkit-text-stroke:0.5px #fff;transform:scaleX(0.9);letter-spacing:1.6px;word-spacing:-3px;">RAW DATA</div>
<div class="doct" style="left:52.81px;top:316px;font-size:17.5px;-webkit-text-stroke:0.15px #fffb2e;transform:scaleX(0.9337);">First</div>
<div class="doct" style="left:89.71px;top:316px;font-size:17.5px;-webkit-text-stroke:0.15px #fffb2e;transform:scaleX(1.1917);">reading:</div>
<div class="doct" style="left:53.2px;top:339px;font-size:17.5px;-webkit-text-stroke:0.15px #fff;transform:scaleX(1.1982);">Second</div>
<div class="doct" style="left:126.82px;top:339px;font-size:17.5px;-webkit-text-stroke:0.15px #fff;transform:scaleX(1.1767);">reading:</div>
<div class="doct" style="left:231px;top:316px;font-size:17.5px;-webkit-text-stroke:0.15px #fffb2e;transform:scaleX(1.004);">54.11</div>
<div class="brk brl" style="left:230px;top:314px;height:21px;"></div><div class="brk brr" style="left:272px;top:314px;height:21px;"></div>
<div class="ph" style="left:230px;top:337px;width:129px;height:22px"><div style="position:absolute;left:0px;top:10px;line-height:12px;font-size:12px;transform:scaleX(1.0);transform-origin:0 0">Enter Density Reading 2</div></div>
<div class="brk brl" style="left:230px;top:337px;height:22px;border-bottom:none;"></div><div class="brk brr" style="left:356px;top:337px;height:22px;border-bottom:none;"></div>
<div class="doct" style="left:52.98px;top:387px;font-size:17.5px;-webkit-text-stroke:0.15px #fff;transform:scaleX(1.1222);">The</div>
<div class="doct" style="left:89.76px;top:387px;font-size:17.5px;-webkit-text-stroke:0.15px #fff;transform:scaleX(1.1391);">readings</div>
<div class="doct" style="left:169.69px;top:387px;font-size:17.5px;-webkit-text-stroke:0.15px #fff;transform:scaleX(1.207);">report</div>
<div class="doct" style="left:230.18px;top:387px;font-size:17.5px;-webkit-text-stroke:0.15px #fff;transform:scaleX(1.3356);">an</div>
<div class="doct" style="left:256.9px;top:387px;font-size:17.5px;-webkit-text-stroke:0.15px #fff;transform:scaleX(1.1027);">initial</div>
<div class="doct" style="left:304.81px;top:387px;font-size:17.5px;-webkit-text-stroke:0.15px #fff;transform:scaleX(1.0897);">mass</div>
<div class="doct" style="left:353.48px;top:387px;font-size:17.5px;-webkit-text-stroke:0.15px #fff;transform:scaleX(1.3356);">of</div>
<div class="ph" style="left:377px;top:383px;width:92px;height:24px"><div style="position:absolute;left:0px;top:10px;line-height:12px;font-size:12px;transform:scaleX(1.0);transform-origin:0 0">Enter Initial Mass</div></div>
<div class="brk brl" style="left:376px;top:383px;height:24px;"></div><div class="brk brr" style="left:466px;top:383px;height:24px;"></div>
<div class="doct" style="left:475.71px;top:387px;font-size:17.5px;-webkit-text-stroke:0.15px #fff;transform:scaleX(1.3848);">g</div>
<div class="doct" style="left:491.22px;top:387px;font-size:17.5px;-webkit-text-stroke:0.15px #fff;transform:scaleX(1.2846);">and</div>
<div class="doct" style="left:532.81px;top:387px;font-size:17.5px;-webkit-text-stroke:0.15px #fff;transform:scaleX(1.2875);">a</div>
<div class="doct" style="left:551.1px;top:387px;font-size:17.5px;-webkit-text-stroke:0.15px #fff;transform:scaleX(1.1467);">final</div>
<div class="doct" style="left:590.51px;top:387px;font-size:17.5px;-webkit-text-stroke:0.15px #fff;transform:scaleX(1.0949);">mass</div>
<div class="doct" style="left:639.48px;top:387px;font-size:17.5px;-webkit-text-stroke:0.15px #fff;transform:scaleX(1.3154);">of</div>
<div class="ph" style="left:53px;top:407px;width:87px;height:24px"><div style="position:absolute;left:0px;top:10px;line-height:12px;font-size:12px;transform:scaleX(0.95);transform-origin:0 0">Enter Final Mass</div></div>
<div class="brk brl" style="left:52px;top:407px;height:24px;"></div><div class="brk brr" style="left:137px;top:407px;height:24px;"></div>
<div class="doct" style="left:146px;top:411px;font-size:17.5px;-webkit-text-stroke:0.15px #fff;transform:scaleX(1.22);">g.</div>
</div></body></html>
